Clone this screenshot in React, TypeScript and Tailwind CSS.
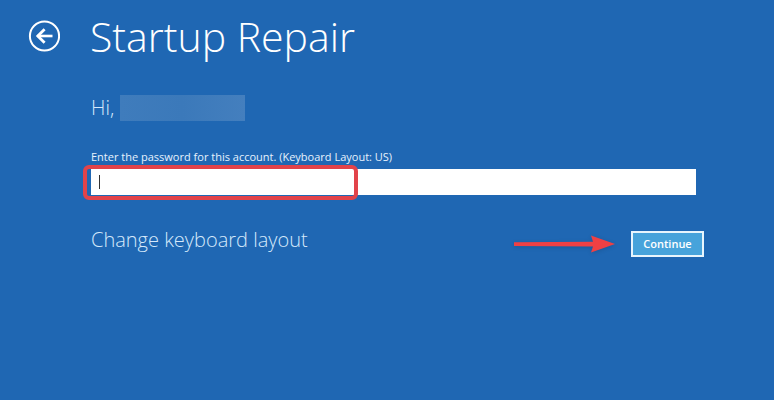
import React from 'react';

const BackIcon: React.FC = () => (
  <svg viewBox="0 0 32 32" className="w-8 h-8" fill="none" stroke="currentColor">
    <circle cx="16.5" cy="16" r="14.6" strokeWidth="2" />
    <path d="M9.5 16H24.5" strokeWidth="2.6" />
    <path d="M16.6 9.2L9.8 16l6.8 6.8" strokeWidth="2.8" />
  </svg>
);

const PointerArrow: React.FC = () => (
  <svg viewBox="0 0 102 18" className="w-[102px] h-[18px] drop-shadow-sm" fill="#ef4044">
    <path d="M1 7.2L80 6.8L78 0.5L102 9L78 17.5L80 11.4L1 11Z" />
  </svg>
);

const App: React.FC = () => {
  return (
    <main className="min-h-screen w-full bg-[#1f67b3] pt-3 pl-7 pr-[70px] text-white font-['Open_Sans','Noto_Sans',sans-serif]">
      {/* Title row */}
      <header className="flex items-center gap-[30px]">
        <button type="button" aria-label="Back" className="shrink-0 w-8 h-8">
          <BackIcon />
        </button>
        <h1 className="text-[41px] leading-[48px] font-light whitespace-nowrap">Startup Repair</h1>
      </header>

      <form className="pl-[63px]" onSubmit={(e) => e.preventDefault()}>
        {/* Greeting with the account name hidden */}
        <div className="mt-[35px] flex items-center gap-[6px] text-xl leading-[26px] font-light text-[#d5e9fb]">
          <span>Hi,</span>
          <span className="w-[125px] h-[26px] bg-linear-to-r from-[#3f7cbc] via-[#3b79ba] to-[#447fbe]" />
        </div>

        <label htmlFor="password" className="mt-7 block text-[11px] leading-4 text-[#e6f2fd]">
          Enter the password for this account. (Keyboard Layout: US)
        </label>
        <div className="relative mt-1 mr-2">
          <input
            id="password"
            type="password"
            className="block w-full h-[26px] bg-white px-2 text-black outline-none"
          />
          <span className="absolute left-2 top-[6px] w-px h-[14px] bg-[#333333]" />
          <span className="absolute -left-2 -top-1 -bottom-[5px] w-[275px] rounded-md border-4 border-[#e2434a] pointer-events-none" />
        </div>

        {/* Footer actions */}
        <div className="mt-8 flex items-start">
          <a href="#keyboard" className="text-xl leading-[26px] font-light text-[#d5e9fb] whitespace-nowrap">
            Change keyboard layout
          </a>
          <div className="ml-auto mt-1 flex items-center gap-4">
            <PointerArrow />
            <button
              type="submit"
              className="w-[73px] h-[26px] border-2 border-[#e8f5fd] bg-[#47a3db] text-[11px] leading-4 font-semibold"
            >
              Continue
            </button>
          </div>
        </div>
      </form>
    </main>
  );
};

export default App;
